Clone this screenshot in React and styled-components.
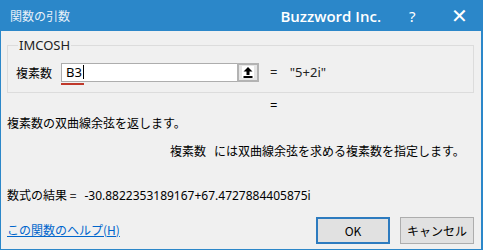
import React from 'react';
import styled, { createGlobalStyle } from 'styled-components';

const GlobalStyle = createGlobalStyle`
  html, body {
    margin: 0;
    padding: 0;
    background: #f0f0f0;
  }
  body {
    font-family: "Noto Sans CJK JP", "Noto Sans", sans-serif;
    font-size: 12px;
    color: #000;
  }
`;

const Window = styled.div`
  width: 483px;
  height: 250px;
  box-sizing: border-box;
  border-left: 1px solid #2b87c9;
  border-right: 2px solid #2b87c9;
  border-bottom: 1px solid #2b87c9;
  background: #f0f0f0;
  display: flex;
  flex-direction: column;
  overflow: hidden;
`;

const TitleBar = styled.div`
  height: 31px;
  flex: none;
  background: #2b87c9;
  color: #fff;
  display: flex;
  align-items: center;
  padding-left: 9px;

  .title {
    font-size: 12px;
    flex: 1;
    color: #e8f1f9;
  }
  .brand {
    font-family: "Open Sans", "Noto Sans", sans-serif;
    font-size: 15px;
    font-weight: 600;
    margin-right: 28px;
  }
  .help {
    font-family: "Noto Sans", sans-serif;
    font-size: 15px;
    width: 20px;
    margin-right: 22px;
  }
  .close {
    font-family: "Noto Sans", sans-serif;
    font-size: 20px;
    font-weight: 300;
    width: 20px;
    margin-right: 10px;
  }
`;

const Body = styled.div`
  flex: 1;
  display: flex;
  flex-direction: column;
  padding: 7px 7px 0 6px;
`;

const Group = styled.fieldset`
  margin: 0;
  width: 467px;
  box-sizing: border-box;
  height: 55px;
  padding: 10px 0 0 8px;
  border: 1px solid #dcdcdc;
  border-radius: 0;

  legend {
    padding: 0 1px;
    margin-left: 2px;
    font-family: "Noto Sans", sans-serif;
    font-size: 13px;
    line-height: 14px;
    color: #222;
  }
`;

const ArgRow = styled.div`
  display: flex;
  align-items: center;
  height: 20px;
`;

const ArgLabel = styled.span`
  width: 45px;
  font-size: 12px;
`;

const Field = styled.div`
  position: relative;
  display: flex;
  width: 198px;
  height: 19px;
  box-sizing: border-box;
  border: 1px solid #adadad;
  background: #fff;
`;

const FieldText = styled.span`
  flex: 1;
  padding-left: 4px;
  font-family: "Noto Sans", sans-serif;
  font-size: 13px;
  line-height: 17px;
  display: flex;
  align-items: center;

  &::after {
    content: "";
    width: 1px;
    height: 14px;
    background: #000;
    margin-left: 1px;
  }
`;

const Squiggle = styled.div`
  position: absolute;
  left: -1px;
  bottom: -4px;
  width: 23px;
  height: 2px;
  background: #c0392b;
`;

const RefButton = styled.div`
  width: 22px;
  height: 19px;
  margin: -1px -1px -1px 0;
  box-sizing: border-box;
  border: 2px solid #b3b3b3;
  background: #e6e6e6;
  display: flex;
  align-items: center;
  justify-content: center;

  span {
    width: 12px;
    height: 12px;
    background: #fff;
    display: flex;
    align-items: center;
    justify-content: center;
  }
`;

const ArgValue = styled.span`
  margin-left: 11px;
  font-family: "Noto Sans", sans-serif;
  font-size: 13px;
  word-spacing: 9px;
  color: #222;
`;

const Equals = styled.div`
  margin: 3px 0 0 263px;
  font-family: "Noto Sans", sans-serif;
  font-size: 13px;
  height: 18px;
`;

const Line = styled.div`
  margin-left: ${p => p.$indent || 0}px;
  margin-top: ${p => p.$gap || 0}px;
  font-size: 12px;
  line-height: 18px;
  white-space: pre;
`;

const Result = styled.div`
  margin-top: 26px;
  font-size: 12px;
  line-height: 18px;
  white-space: pre;

  .num {
    font-family: "Noto Sans", sans-serif;
    font-size: 12px;
  }
`;

const Footer = styled.div`
  display: flex;
  align-items: center;
  margin-top: 12px;
`;

const HelpLink = styled.a`
  flex: 1;
  color: #0066cc;
  text-decoration: underline;
  font-size: 12px;
  margin-bottom: 3px;
`;

const Button = styled.button`
  width: 74px;
  height: 27px;
  margin-left: ${p => p.$gap}px;
  box-sizing: border-box;
  background: #e1e1e1;
  border: ${p => (p.$primary ? '2px solid #2d7bbf' : '1px solid #adadad')};
  font-family: "Noto Sans CJK JP", "Noto Sans", sans-serif;
  font-size: 12px;
  color: #000;
  padding: 0;
`;

function UpArrow() {
  return (
    <svg width="10" height="11" viewBox="0 0 10 11">
      <path d="M5 0 L9.5 4.5 H6.5 V8 H3.5 V4.5 H0.5 Z" fill="#000" />
      <rect x="0.5" y="9" width="9" height="2" fill="#000" />
    </svg>
  );
}

export default function App() {
  return (
    <>
      <GlobalStyle />
      <Window>
        <TitleBar>
          <span className="title">関数の引数</span>
          <span className="brand">Buzzword Inc.</span>
          <span className="help">?</span>
          <span className="close">✕</span>
        </TitleBar>
        <Body>
          <Group>
            <legend>IMCOSH</legend>
            <ArgRow>
              <ArgLabel>複素数</ArgLabel>
              <Field>
                <FieldText>B3</FieldText>
                <Squiggle />
                <RefButton>
                  <span><UpArrow /></span>
                </RefButton>
              </Field>
              <ArgValue>= "5+2i"</ArgValue>
            </ArgRow>
          </Group>
          <Equals>=</Equals>
          <Line>複素数の双曲線余弦を返します。</Line>
          <Line $indent={163} $gap={10}>複素数   には双曲線余弦を求める複素数を指定します。</Line>
          <Result>数式の結果 =   <span className="num">-30.8822353189167+67.4727884405875i</span></Result>
          <Footer>
            <HelpLink href="#">この関数のヘルプ(H)</HelpLink>
            <Button $primary $gap={0}>OK</Button>
            <Button $gap={10}>キャンセル</Button>
          </Footer>
        </Body>
      </Window>
    </>
  );
}
